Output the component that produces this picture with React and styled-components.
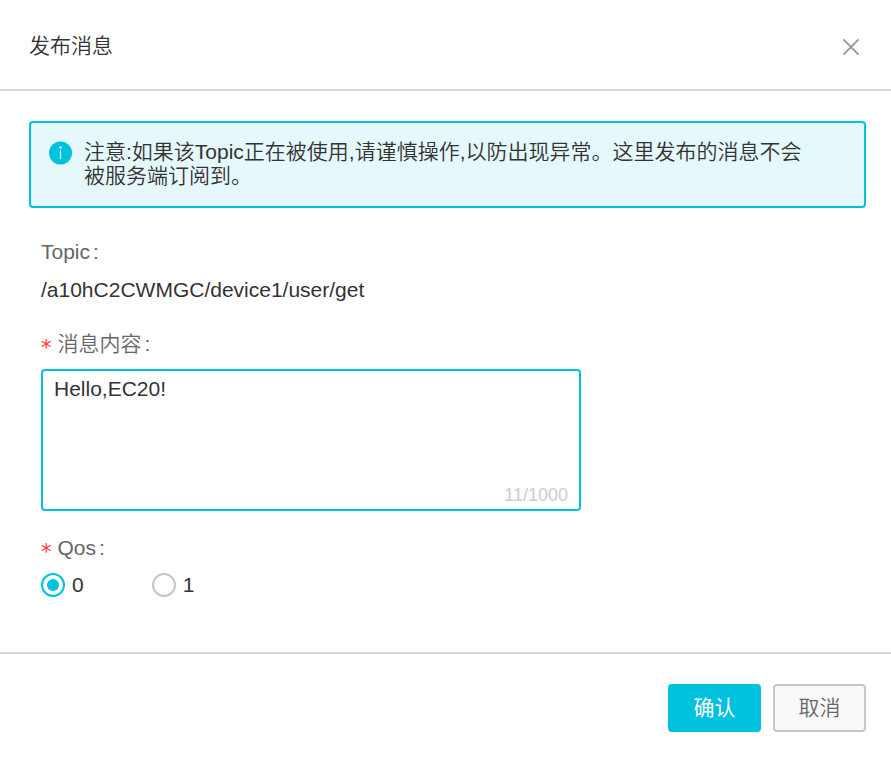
import { useState } from 'react';
import styled, { createGlobalStyle } from 'styled-components';

const GlobalStyle = createGlobalStyle`
  * {
    box-sizing: border-box;
  }

  body {
    margin: 0;
    background: #fff;
    color: #333;
    font-family: "Liberation Sans", "Noto Sans CJK SC", sans-serif;
    font-size: 21px;
    font-weight: 350;
    line-height: 24px;
  }

  button,
  input,
  textarea {
    font: inherit;
  }
`;

const Dialog = styled.form`
  display: flex;
  flex-direction: column;
`;

const Header = styled.header`
  display: flex;
  align-items: center;
  justify-content: space-between;
  padding: 34px 24px 31px 29px;
  border-bottom: 2px solid #d8d8d8;
`;

const Title = styled.h2`
  margin: 0;
  font-size: 21px;
  font-weight: 350;
`;

const CloseButton = styled.button`
  display: flex;
  padding: 2px 8px 0;
  border: 0;
  background: none;
  color: #999;
  cursor: pointer;
`;

const Body = styled.main`
  padding: 30px 25px 55px 29px;
`;

const Notice = styled.div`
  display: flex;
  align-items: flex-start;
  gap: 11px;
  padding: 17px 48px 18px 18px;
  border: 2px solid #00c1de;
  border-radius: 4px;
  background: #e5f8fc;
`;

const NoticeIcon = styled.svg`
  flex: none;
  margin-top: 1px;
`;

const NoticeText = styled.p`
  margin: 0;
`;

const Fields = styled.div`
  display: grid;
  gap: 25px;
  padding: 32px 12px 0;
`;

const Field = styled.div`
  display: grid;
  gap: 13px;
  min-width: 0;
`;

const Label = styled.label`
  display: flex;
  align-items: flex-end;
  color: #666;

  &::after {
    content: ':';
    margin-left: 3px;
  }
`;

const Required = styled.span`
  margin-right: 6px;
  color: #f33;
  font-family: "DejaVu Sans", sans-serif;
  font-weight: 400;
  line-height: 16px;
`;

const Value = styled.output`
  padding-bottom: 4px;
  line-height: 26px;
  overflow-wrap: anywhere;
`;

const TextBox = styled.div`
  position: relative;
  width: 540px;
  max-width: 100%;
`;

const TextArea = styled.textarea`
  display: block;
  width: 100%;
  height: 142px;
  padding: 6px 11px;
  border: 2px solid #00c1de;
  border-radius: 4px;
  outline: 0;
  color: #333;
  resize: none;
`;

const Counter = styled.span`
  position: absolute;
  right: 13px;
  bottom: 4px;
  color: #ccc;
  font-size: 18px;
`;

const RadioGroup = styled.div`
  display: flex;
  gap: 68px;
`;

const RadioLabel = styled.label`
  display: flex;
  align-items: center;
  gap: 7px;
`;

const Radio = styled.input`
  width: 24px;
  height: 24px;
  margin: 0;
  border: 2px solid #c4c6cf;
  border-radius: 50%;
  appearance: none;

  &:checked {
    border-color: #00c1de;
    background: #00c1de content-box;
    padding: 4px;
  }
`;

const Footer = styled.footer`
  display: flex;
  justify-content: flex-end;
  gap: 12px;
  padding: 30px 25px;
  border-top: 2px solid #d8d8d8;
`;

const Button = styled.button`
  min-width: 93px;
  height: 48px;
  padding: 0 20px;
  border: 2px solid ${(props) => (props.$primary ? '#00c1de' : '#c4c6cf')};
  border-radius: 4px;
  background: ${(props) => (props.$primary ? '#00c1de' : '#f9f9f9')};
  color: ${(props) => (props.$primary ? '#fff' : '#666')};
  font-weight: ${(props) => (props.$primary ? 400 : 350)};
  cursor: pointer;
`;

const App = () => {
  const [message, setMessage] = useState('Hello,EC20!');
  const [qos, setQos] = useState('0');

  return (
    <>
      <GlobalStyle />
      <Dialog onSubmit={(e) => e.preventDefault()}>
        <Header>
          <Title>发布消息</Title>
          <CloseButton type="button" aria-label="关闭">
            <svg width="16" height="18" viewBox="0 0 16 18" fill="none" stroke="currentColor" strokeWidth="1.8">
              <path d="M0.5 1.5l15 15M15.5 1.5l-15 15" />
            </svg>
          </CloseButton>
        </Header>
        <Body>
          <Notice>
            <NoticeIcon width="24" height="24" viewBox="0 0 24 24">
              <circle cx="11.5" cy="12" r="11.5" fill="#00c1de" />
              <circle cx="11.5" cy="6.5" r="1.2" fill="#e5f8fc" />
              <path d="M11.5 9v9" stroke="#e5f8fc" strokeWidth="1.2" />
            </NoticeIcon>
            <NoticeText>
              注意:如果该Topic正在被使用,请谨慎操作,以防出现异常。这里发布的消息不会被服务端订阅到。
            </NoticeText>
          </Notice>
          <Fields>
            <Field>
              <Label htmlFor="topic">Topic</Label>
              <Value id="topic">/a10hC2CWMGC/device1/user/get</Value>
            </Field>
            <Field>
              <Label htmlFor="message">
                <Required>*</Required>
                消息内容
              </Label>
              <TextBox>
                <TextArea
                  id="message"
                  maxLength={1000}
                  value={message}
                  onChange={(e) => setMessage(e.target.value)}
                />
                <Counter>{message.length}/1000</Counter>
              </TextBox>
            </Field>
            <Field>
              <Label as="span" id="qos-label">
                <Required>*</Required>
                Qos
              </Label>
              <RadioGroup role="radiogroup" aria-labelledby="qos-label">
                {['0', '1'].map((level) => (
                  <RadioLabel key={level}>
                    <Radio
                      type="radio"
                      name="qos"
                      value={level}
                      checked={qos === level}
                      onChange={() => setQos(level)}
                    />
                    {level}
                  </RadioLabel>
                ))}
              </RadioGroup>
            </Field>
          </Fields>
        </Body>
        <Footer>
          <Button type="submit" $primary>确认</Button>
          <Button type="button">取消</Button>
        </Footer>
      </Dialog>
    </>
  );
};

export default App;
